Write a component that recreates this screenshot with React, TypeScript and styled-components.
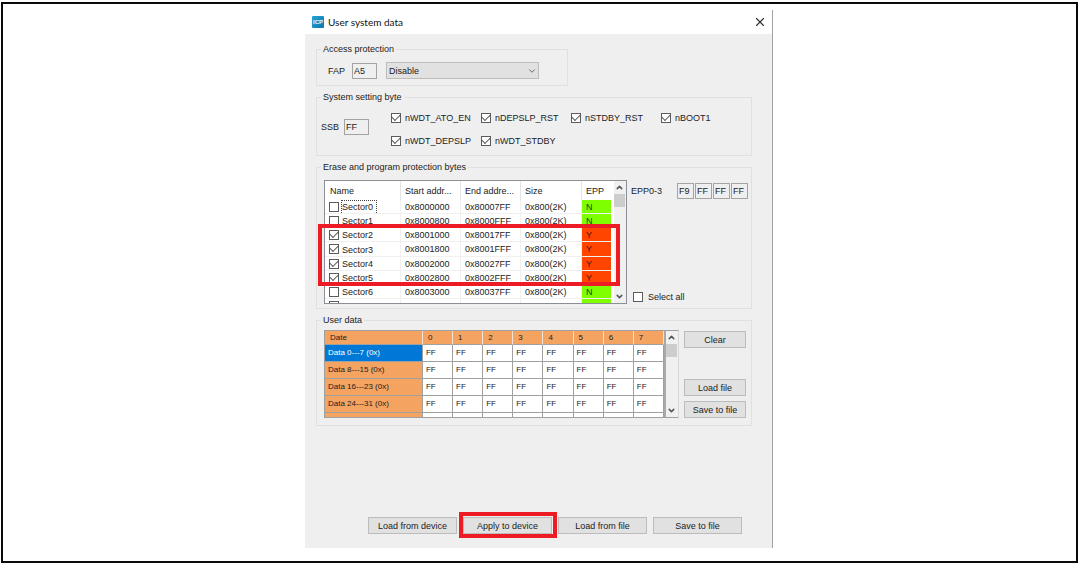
import React from 'react';
import styled, { createGlobalStyle, css } from 'styled-components';
import { ChevronDown, ChevronUp, X } from 'lucide-react';

const GlobalStyle = createGlobalStyle`
  * { box-sizing: border-box; }
  body {
    margin: 0;
    background: #fff;
    color: #222;
    font: 9px/12px "Liberation Sans", Arial, sans-serif;
  }
  button, input, select { font: inherit; color: inherit; margin: 0; }
`;

const Frame = styled.main`
  display: flex;
  justify-content: center;
  margin: 2px 2px 0 1px;
  padding: 6px 0 13px;
  border: 2px solid #0a0a0a;
`;

const Dialog = styled.section`
  flex: 0 1 468px;
  margin-right: 1px;
  border-right: 1px solid #a2a2a2;
`;

const TitleBar = styled.header`
  display: flex;
  align-items: center;
  height: 24px;
  padding: 0 5px 0 7px;
  gap: 4px;
`;

const Title = styled.h1`
  flex: 1;
  margin: 0;
  font: 10px/12px Lato, "Open Sans", sans-serif;
  color: #111;
`;

const CloseButton = styled.button`
  display: flex;
  padding: 0;
  border: 0;
  background: none;
  color: #333;
`;

const Body = styled.form`
  display: flex;
  flex-direction: column;
  gap: 5px;
  padding: 9px 20px 14px 11px;
  background: #efefef;
`;

const Group = styled.fieldset<{ $narrow?: boolean }>`
  min-width: 0;
  width: ${p => (p.$narrow ? '252px' : 'auto')};
  margin: 0;
  padding: 0;
  border: 1px solid #e0e0e0;
`;

const Legend = styled.legend`
  height: 12px;
  margin-left: 4px;
  padding: 0 2px;
`;

const Row = styled.div<{ $gap?: number; $align?: string; $pad?: string }>`
  display: flex;
  align-items: ${p => p.$align ?? 'center'};
  gap: ${p => p.$gap ?? 9}px;
  padding: ${p => p.$pad ?? 0};
`;

const FieldLabel = styled.label<{ $gap: number }>`
  display: flex;
  align-items: center;
  gap: ${p => p.$gap}px;
`;

const ByteInput = styled.input<{ $small?: boolean }>`
  width: ${p => (p.$small ? 17 : 25)}px;
  height: 16px;
  padding: 0 0 0 1px;
  border: 1px solid #a3a3a3;
  border-radius: 0;
  background: #efefef;
  outline: 0;
`;

const SelectBox = styled.span`
  display: grid;
  align-items: center;
  width: 153px;
  > * { grid-area: 1 / 1; }
  > svg { justify-self: end; margin-right: 2px; pointer-events: none; color: #555; }
`;

const Select = styled.select`
  appearance: none;
  width: 100%;
  height: 17px;
  padding: 0 2px;
  border: 1px solid #bdbdbd;
  border-radius: 0;
  background: #e1e1e1;
`;

const CheckGrid = styled.div`
  display: grid;
  grid-template-columns: repeat(4, 90px);
  row-gap: 11px;
`;

const CheckLabel = styled.label<{ $gap?: number }>`
  display: flex;
  align-items: center;
  gap: ${p => p.$gap ?? 4}px;
  white-space: nowrap;
`;

const CheckInput = styled.input.attrs({ type: 'checkbox' })`
  appearance: none;
  display: grid;
  place-items: center;
  flex: none;
  width: 10px;
  height: 10px;
  border: 1px solid #5c5c5c;
  background: #fff;
  &:checked::before {
    content: '';
    width: 7px;
    height: 4px;
    margin-bottom: 3px;
    border: solid #555;
    border-width: 0 0 1px 1px;
    transform: rotate(-45deg);
  }
`;

const highlight = css`
  content: '';
  position: absolute;
  border: 4px solid #ed1c24;
  pointer-events: none;
`;

const SectorPanel = styled.div`
  position: relative;
  flex: none;
  width: 303px;
  &::after {
    ${highlight}
    inset: 44px 7px 18px -6px;
  }
`;

const SectorScroll = styled.div`
  display: flex;
  justify-content: space-between;
  height: 124px;
  overflow: hidden;
  border: 1px solid #8b8f96;
  background: #fff;
`;

const SectorTable = styled.table`
  table-layout: fixed;
  width: 286px;
  height: max-content;
  border-spacing: 0;
  th, td {
    height: 14px;
    padding: 0 0 0 4px;
    text-align: left;
    font-weight: normal;
    white-space: nowrap;
    border-right: 1px solid #f0f0f0;
  }
  th { height: 19px; border-right-color: #e4e4e4; }
  th:first-child { padding-left: 5px; }
  td { border-bottom: 1px solid #f0f0f0; }
  tr:nth-child(4n) td { height: 15px; }
  th:last-child, td:last-child { border-right: 0; }
`;

const EppCell = styled.td<{ $on: boolean }>`
  background: ${p => (p.$on ? '#ff4500' : '#7fff00')};
  background-clip: padding-box;
  color: ${p => (p.$on ? '#4a1400' : '#1e4400')};
`;

const SectorName = styled.label<{ $focus?: boolean }>`
  display: flex;
  align-items: center;
  gap: 2px;
  span {
    height: 13px;
    line-height: 12px;
    padding: 0 3px 0 0;
    border: 1px dotted ${p => (p.$focus ? '#444' : 'transparent')};
    border-bottom: 0;
  }
`;

const ScrollBar = styled.div`
  display: flex;
  flex-direction: column;
  align-items: center;
  flex: none;
  width: 12px;
  background: #f0f0f0;
  color: #555;
  > svg { flex: none; margin: 2px 0; }
  > svg:last-child { margin-top: auto; }
`;

const Thumb = styled.div`
  width: 11px;
  height: 13px;
  background: #cdcdcd;
`;

const EppPanel = styled.div`
  display: flex;
  flex: 1;
  flex-direction: column;
  justify-content: space-between;
  padding: 3px 0 1px 4px;
`;

const DataScroll = styled.div`
  display: flex;
  flex: none;
  width: 355px;
  height: 88px;
  overflow: hidden;
  border: 1px solid #a0a0a0;
  border-right-color: #d8d8d8;
  background: #f0f0f0;
`;

const DataTable = styled.table`
  table-layout: fixed;
  width: 341px;
  height: max-content;
  border-spacing: 0;
  border-right: 2px solid #a9a9a9;
  background: #fff;
  font-size: 8px;
  line-height: 10px;
  th, td {
    height: 17px;
    padding: 0 0 0 3px;
    text-align: left;
    font-weight: normal;
    white-space: nowrap;
    border-right: 1px solid #a0a0a0;
    border-bottom: 1px solid #a0a0a0;
  }
  thead th {
    height: 14px;
    padding: 1px 0 0 5px;
    background: #f4a460;
    border-right-color: #f3e3d5;
  }
`;

const RowHead = styled.th.attrs({ scope: 'row' })<{ $selected: boolean }>`
  background: ${p => (p.$selected ? '#0078d7' : '#f4a460')};
  color: ${p => (p.$selected ? '#fff' : 'inherit')};
`;

const PushButton = styled.button<{ $width: number }>`
  width: ${p => p.$width}px;
  height: 17px;
  padding: 0;
  border: 1px solid #bcbcbc;
  background: #e1e1e1;
  white-space: nowrap;
`;

const SideButtons = styled.div`
  display: flex;
  flex-direction: column;
  gap: 5px;
  padding-top: 1px;
  > :first-child { margin-bottom: auto; }
`;

const Footer = styled.footer`
  display: flex;
  justify-content: flex-end;
  gap: 6px;
  margin: 86px 10px 0 0;
`;

const Marked = styled.span`
  position: relative;
  display: flex;
  &::after {
    ${highlight}
    inset: -5px -5px -4px -4px;
  }
`;

const flags = ['nWDT_ATO_EN', 'nDEPSLP_RST', 'nSTDBY_RST', 'nBOOT1', 'nWDT_DEPSLP', 'nWDT_STDBY'];

const sectors = [
  { start: '0x8000000', end: '0x80007FF', on: false },
  { start: '0x8000800', end: '0x8000FFF', on: false },
  { start: '0x8001000', end: '0x80017FF', on: true },
  { start: '0x8001800', end: '0x8001FFF', on: true },
  { start: '0x8002000', end: '0x80027FF', on: true },
  { start: '0x8002800', end: '0x8002FFF', on: true },
  { start: '0x8003000', end: '0x80037FF', on: false },
  { start: '', end: '', on: false },
];

const columns = [0, 1, 2, 3, 4, 5, 6, 7];
const dataRows = ['Data 0---7 (0x)', 'Data 8---15 (0x)', 'Data 16---23 (0x)', 'Data 24---31 (0x)', ''];

const Logo = () => (
  <svg width="12" height="12" viewBox="0 0 12 12" aria-hidden="true">
    <defs>
      <linearGradient id="logo" x1="0" y1="0" x2="1" y2="1">
        <stop offset="0" stopColor="#2ba3d4" />
        <stop offset="1" stopColor="#0878ae" />
      </linearGradient>
    </defs>
    <rect width="12" height="12" rx="1" fill="url(#logo)" />
    <text x="6" y="8" textAnchor="middle" fontSize="6" fontWeight="bold" fill="#e8f6fc">ICP</text>
  </svg>
);

const Scroller = () => (
  <ScrollBar>
    <ChevronUp size={9} strokeWidth={4} />
    <Thumb />
    <ChevronDown size={9} strokeWidth={4} />
  </ScrollBar>
);

export default function App() {
  return (
    <>
      <GlobalStyle />
      <Frame>
        <Dialog>
          <TitleBar>
            <Logo />
            <Title>User system data</Title>
            <CloseButton type="button" aria-label="Close">
              <X size={14} strokeWidth={2} />
            </CloseButton>
          </TitleBar>
          <Body>
            <Group $narrow>
              <Legend>Access protection</Legend>
              <Row $pad="7px 11px 6px">
                <FieldLabel $gap={7}>
                  FAP
                  <ByteInput defaultValue="A5" />
                </FieldLabel>
                <SelectBox>
                  <Select aria-label="Access protection level">
                    <option>Disable</option>
                  </Select>
                  <ChevronDown size={10} strokeWidth={2} />
                </SelectBox>
              </Row>
            </Group>

            <Group>
              <Legend>System setting byte</Legend>
              <Row $gap={22} $align="flex-start" $pad="9px 0 8px 4px">
                <Row $pad="7px 0 0">
                  <FieldLabel $gap={5}>
                    SSB
                    <ByteInput defaultValue="FF" />
                  </FieldLabel>
                </Row>
                <CheckGrid>
                  {flags.map(flag => (
                    <CheckLabel key={flag}>
                      <CheckInput defaultChecked />
                      {flag}
                    </CheckLabel>
                  ))}
                </CheckGrid>
              </Row>
            </Group>

            <Group>
              <Legend>Erase and program protection bytes</Legend>
              <Row $gap={0} $align="stretch" $pad="7px 0 4px 7px">
                <SectorPanel>
                  <SectorScroll>
                    <SectorTable>
                      <colgroup>
                        <col style={{ width: 76 }} />
                        <col style={{ width: 60 }} />
                        <col style={{ width: 60 }} />
                        <col style={{ width: 61 }} />
                        <col />
                      </colgroup>
                      <thead>
                        <tr>
                          <th>Name</th>
                          <th>Start addr...</th>
                          <th>End addre...</th>
                          <th>Size</th>
                          <th>EPP</th>
                        </tr>
                      </thead>
                      <tbody>
                        {sectors.map((s, i) => (
                          <tr key={i}>
                            <td>
                              <SectorName $focus={i === 0}>
                                <CheckInput defaultChecked={s.on} aria-label={`Sector${i}`} />
                                <span>{s.start && `Sector${i}`}</span>
                              </SectorName>
                            </td>
                            <td>{s.start}</td>
                            <td>{s.end}</td>
                            <td>{s.start && '0x800(2K)'}</td>
                            <EppCell $on={s.on}>{s.start && (s.on ? 'Y' : 'N')}</EppCell>
                          </tr>
                        ))}
                      </tbody>
                    </SectorTable>
                    <Scroller />
                  </SectorScroll>
                </SectorPanel>
                <EppPanel>
                  <Row $gap={15}>
                    <span>EPP0-3</span>
                    <Row $gap={1}>
                      {['F9', 'FF', 'FF', 'FF'].map((v, i) => (
                        <ByteInput key={i} $small defaultValue={v} aria-label={`EPP${i}`} />
                      ))}
                    </Row>
                  </Row>
                  <Row $pad="0 0 0 2px">
                    <CheckLabel $gap={5}>
                      <CheckInput />
                      Select all
                    </CheckLabel>
                  </Row>
                </EppPanel>
              </Row>
            </Group>

            <Group>
              <Legend>User data</Legend>
              <Row $gap={5} $align="stretch" $pad="4px 5px 7px 7px">
                <DataScroll>
                  <DataTable>
                    <colgroup>
                      <col style={{ width: 98 }} />
                      {columns.map(c => <col key={c} />)}
                    </colgroup>
                    <thead>
                      <tr>
                        <th scope="col">Date</th>
                        {columns.map(c => <th key={c} scope="col">{c}</th>)}
                      </tr>
                    </thead>
                    <tbody>
                      {dataRows.map((name, i) => (
                        <tr key={i}>
                          <RowHead $selected={i === 0}>{name}</RowHead>
                          {columns.map(c => <td key={c}>{name && 'FF'}</td>)}
                        </tr>
                      ))}
                    </tbody>
                  </DataTable>
                  <Scroller />
                </DataScroll>
                <SideButtons>
                  <PushButton type="button" $width={62}>Clear</PushButton>
                  <PushButton type="button" $width={62}>Load file</PushButton>
                  <PushButton type="button" $width={62}>Save to file</PushButton>
                </SideButtons>
              </Row>
            </Group>

            <Footer>
              <PushButton type="button" $width={89}>Load from device</PushButton>
              <Marked>
                <PushButton type="button" $width={89}>Apply to device</PushButton>
              </Marked>
              <PushButton type="button" $width={89}>Load from file</PushButton>
              <PushButton type="button" $width={89}>Save to file</PushButton>
            </Footer>
          </Body>
        </Dialog>
      </Frame>
    </>
  );
}
